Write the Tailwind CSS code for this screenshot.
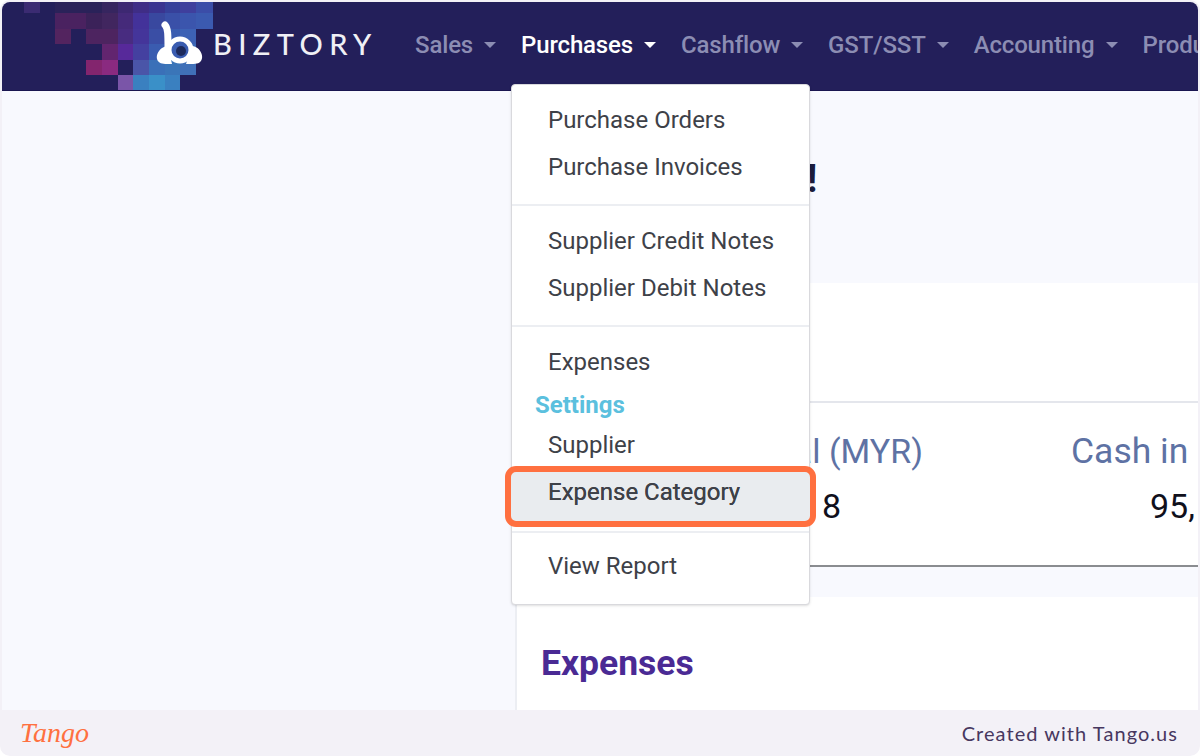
<!DOCTYPE html>
<html lang="en">
<head>
    <meta charset="UTF-8">
    <meta name="viewport" content="width=device-width, initial-scale=1.0">
    <script src="https://cdn.jsdelivr.net/npm/@tailwindcss/browser@4"></script>
    <title>Biztory purchases menu</title>
</head>
<body class="bg-white font-['Roboto',sans-serif]">
    <div class="relative h-[756px] w-[1200px] overflow-hidden rounded-[10px] bg-[#f3f1f7] pt-[2px] flex flex-col">
        <!-- Navbar -->
        <nav class="relative mx-[2px] h-[89px] shrink-0 overflow-hidden rounded-t-[8px] bg-[#231f5a] flex items-center text-[24px] font-medium text-[#8c8db3] border-b border-[#1a1650]">
            <svg class="absolute left-0 top-0 blur-[0.4px]" width="240" height="89" viewBox="2 2 240 89">
                <rect x="24" y="2" width="16" height="11" fill="#3b2b72"/>
                <rect x="55" y="2" width="47" height="11" fill="#2a2259"/>
                <rect x="102" y="2" width="16" height="11" fill="#36255f"/>
                <rect x="118" y="2" width="15" height="11" fill="#3d2872"/>
                <rect x="133" y="2" width="16" height="11" fill="#3f2d86"/>
                <rect x="149" y="2" width="16" height="11" fill="#3a3490"/>
                <rect x="165" y="2" width="15" height="11" fill="#36409a"/>
                <rect x="180" y="2" width="16" height="11" fill="#3f3f9d"/>
                <rect x="196" y="2" width="17" height="11" fill="#3b4da8"/>

                <rect x="55" y="13" width="31" height="16" fill="#4a2260"/>
                <rect x="86" y="13" width="16" height="16" fill="#3b2259"/>
                <rect x="102" y="13" width="16" height="16" fill="#41265f"/>
                <rect x="118" y="13" width="15" height="16" fill="#452a7a"/>
                <rect x="133" y="13" width="16" height="16" fill="#43329a"/>
                <rect x="149" y="13" width="16" height="16" fill="#39489f"/>
                <rect x="165" y="13" width="15" height="16" fill="#3a50a8"/>
                <rect x="180" y="13" width="16" height="16" fill="#3b55ad"/>
                <rect x="196" y="13" width="17" height="16" fill="#3b5ab0"/>

                <rect x="55" y="29" width="16" height="15" fill="#53245f"/>
                <rect x="86" y="29" width="32" height="15" fill="#4d2460"/>
                <rect x="118" y="29" width="15" height="15" fill="#482c80"/>
                <rect x="133" y="29" width="16" height="15" fill="#44359a"/>
                <rect x="149" y="29" width="16" height="15" fill="#3a4ea5"/>
                <rect x="165" y="29" width="15" height="15" fill="#3a5cb0"/>
                <rect x="180" y="29" width="16" height="15" fill="#3d62b5"/>

                <rect x="102" y="44" width="16" height="16" fill="#62256f"/>
                <rect x="118" y="44" width="15" height="16" fill="#57299a"/>
                <rect x="133" y="44" width="16" height="16" fill="#4440a0"/>
                <rect x="149" y="44" width="16" height="16" fill="#3a5cb0"/>
                <rect x="165" y="44" width="15" height="16" fill="#3a66b8"/>
                <rect x="180" y="44" width="16" height="16" fill="#3d6ab8"/>

                <rect x="86" y="60" width="16" height="15" fill="#83256e"/>
                <rect x="102" y="60" width="16" height="15" fill="#8a2a80"/>
                <rect x="133" y="60" width="16" height="15" fill="#4a55a8"/>
                <rect x="149" y="60" width="16" height="15" fill="#3a70b8"/>
                <rect x="165" y="60" width="15" height="15" fill="#3a75b8"/>
                <rect x="180" y="60" width="16" height="15" fill="#4070b8"/>

                <rect x="118" y="75" width="15" height="16" fill="#7a55a8"/>
                <rect x="133" y="75" width="16" height="16" fill="#3a80c0"/>
                <rect x="149" y="75" width="16" height="16" fill="#3a90c8"/>
                <rect x="165" y="75" width="15" height="16" fill="#3a80c0"/>

                <!-- logo mark -->
                <path d="M168 46 C158 47 154 58 159 62 C161 64 165 64 172 64 Z" fill="#fff"/>
                <path d="M192 46 C201 47 205 58 200 62 C198 64 194 64 186 64 Z" fill="#fff"/>
                <path d="M165 25 C168 28 168 34 168 50" stroke="#fff" stroke-width="7" stroke-linecap="round" fill="none"/>
                <circle cx="180" cy="50" r="11" stroke="#fff" stroke-width="5" fill="#3a5cb0"/>
                <circle cx="181" cy="51" r="5" fill="#1d2a5c"/>
            </svg>
            <span class="absolute left-[211px] top-[24px] font-['Lato',sans-serif] text-[29px] leading-[36px] font-medium tracking-[6.4px] text-[#f0f0f5]">BIZTORY</span>

            <div class="ml-[413px] mb-[3px] flex items-center gap-[25px] whitespace-nowrap tracking-[-0.15px]">
                <a class="flex items-center gap-[11px]">Sales <span class="h-0 w-0 border-x-[6px] border-t-[6px] border-x-transparent border-t-[#8c8db3]"></span></a>
                <a class="flex items-center gap-[11px] text-white">Purchases <span class="h-0 w-0 border-x-[6px] border-t-[6px] border-x-transparent border-t-white"></span></a>
                <a class="flex items-center gap-[11px]">Cashflow <span class="h-0 w-0 border-x-[6px] border-t-[6px] border-x-transparent border-t-[#8c8db3]"></span></a>
                <a class="flex items-center gap-[11px]">GST/SST <span class="h-0 w-0 border-x-[6px] border-t-[6px] border-x-transparent border-t-[#8c8db3]"></span></a>
                <a class="flex items-center gap-[11px]">Accounting <span class="h-0 w-0 border-x-[6px] border-t-[6px] border-x-transparent border-t-[#8c8db3]"></span></a>
                <a>Products</a>
            </div>
        </nav>

        <!-- Main Content -->
        <main class="mx-[2px] h-[619px] shrink-0 overflow-hidden bg-[#f8f9fe] pl-[513px]">
            <div class="h-[192px] pt-[66px] pl-[292px] text-[38px] leading-[44px] font-bold text-[#1c1c3c]">!</div>
            <section class="h-[284px] border-l border-[#eceef3] bg-white border-b-2 border-b-[#8a8c90]">
                <div class="h-[120px] border-b-2 border-[#e4e6ec]"></div>
                <div class="flex pt-[26px]">
                    <div class="w-[407px] text-right text-[34px] leading-[44px] text-[#5e72a4]">Total (MYR)</div>
                    <div class="ml-[148px] whitespace-nowrap text-[35.5px] leading-[44px] text-[#5e72a4]">Cash in</div>
                </div>
                <div class="flex pt-[11px] text-[34px] leading-[44px] text-[#10101c]">
                    <div class="w-[325px] text-right">8</div>
                    <div class="ml-[309px] whitespace-nowrap">95,</div>
                </div>
            </section>
            <section class="mt-[30px] h-[120px] border-l-2 border-[#eceef3] bg-white pl-[24px] pt-[45px]">
                <h2 class="text-[35.5px] leading-[42px] font-bold text-[#4a2a94]">Expenses</h2>
            </section>
        </main>

        <!-- Dropdown -->
        <div class="absolute left-[511px] top-[84px] h-[521px] w-[299px] rounded-[4px] border border-[#d9d9dd] bg-white text-[24px] leading-[47px] text-[#3e4148] shadow-sm">
            <div class="pt-[12px]">
                <a class="block pl-[36px]">Purchase Orders</a>
                <a class="block pl-[36px]">Purchase Invoices</a>
            </div>
            <div class="mt-[13px] mb-[12px] border-t-2 border-[#eceef2]"></div>
            <a class="block pl-[36px]">Supplier Credit Notes</a>
            <a class="block pl-[36px]">Supplier Debit Notes</a>
            <div class="mt-[13px] mb-[12px] border-t-2 border-[#eceef2]"></div>
            <a class="block pl-[36px]">Expenses</a>
            <div class="h-[36px] pl-[23px] text-[24px] leading-[38px] font-bold text-[#5bc0de]">Settings</div>
            <a class="block pl-[36px]">Supplier</a>
            <a class="relative z-10 block pl-[36px]">Expense Category</a>
            <div class="mt-[15px] mb-[10px] border-t-2 border-[#eceef2]"></div>
            <a class="block pl-[36px]">View Report</a>
        </div>

        <!-- Highlight around the menu item -->
        <div class="absolute left-[505px] top-[466px] h-[61px] w-[311px] rounded-[11px] border-[6px] border-[#ff7040] bg-[#e9ecef]">
            <span class="block pl-[37px] text-[24px] leading-[41px] text-[#3e4148]">Expense Category</span>
        </div>

        <!-- Footer -->
        <footer class="flex h-[46px] shrink-0 items-center justify-between pl-[20px] pr-[22px]">
            <span class="font-['Liberation_Serif',serif] text-[28px] italic leading-[40px] text-[#ff7040]">Tango</span>
            <span class="font-['Lato',sans-serif] text-[20px] tracking-[1.05px] text-[#47375f]">Created with Tango.us</span>
        </footer>
    </div>
</body>
</html>
